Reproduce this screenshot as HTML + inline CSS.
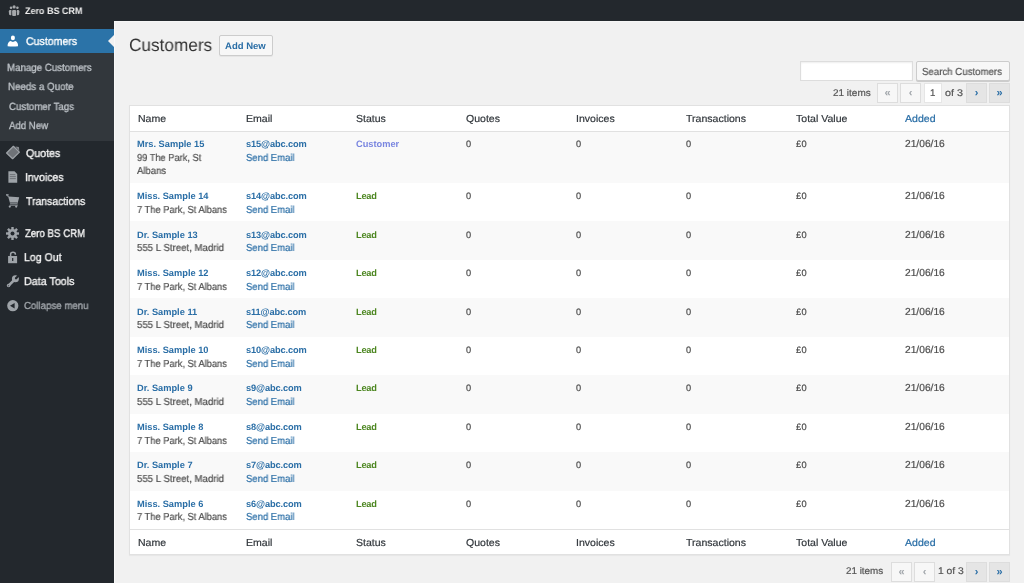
<!DOCTYPE html>
<html><head><meta charset="utf-8"><style>
html,body{margin:0;padding:0;width:1024px;height:583px;overflow:hidden;background:#f1f1f1;}
body{font-family:"Liberation Sans",sans-serif;position:relative;}
.t{position:absolute;line-height:1;white-space:nowrap;text-rendering:geometricPrecision;will-change:transform;}
.r{-webkit-text-stroke:0.2px currentColor;}
.s{-webkit-text-stroke:0.35px currentColor;}
svg{position:absolute;}
</style></head><body>
<div style="position:absolute;left:0px;top:0px;width:1024px;height:21px;background:#23282d"></div>
<div style="position:absolute;left:0px;top:21px;width:114px;height:562px;background:#23282d"></div>
<div style="position:absolute;left:0px;top:29px;width:114px;height:24px;background:#2b73a8"></div>
<svg style="left:108px;top:35px" width="6" height="12" viewBox="0 0 6 12"><path d="M6 0 L0 6 L6 12 Z" fill="#f1f1f1"/></svg>
<div style="position:absolute;left:114px;top:21px;width:1px;height:562px;background:#f8f8f8"></div>
<div style="position:absolute;left:114px;top:21px;width:910px;height:1px;background:#f6f6f6"></div>
<div style="position:absolute;left:0px;top:53px;width:114px;height:88px;background:#32373c"></div>
<svg style="left:8px;top:5px" width="12" height="12" viewBox="0 0 12 12" fill="#a5a8ab">
<circle cx="6.1" cy="1.9" r="1.6"/><circle cx="3" cy="2.7" r="1.25"/><circle cx="9.4" cy="2.7" r="1.25"/>
<path d="M4.1 6.2 Q4.1 5 5.3 5 L6.9 5 Q8.2 5 8.2 6.2 L8.1 10.4 Q6.1 11.6 4.2 10.4Z"/>
<path d="M0.8 6.4 Q0.9 5 2.2 5 L3.4 5 L3.3 10 Q1.9 10.6 1.1 9.6Z"/>
<path d="M11.4 6.4 Q11.3 5 10 5 L8.9 5 L9 10 Q10.4 10.6 11.1 9.6Z"/>
</svg>
<div class="t" style="left:25.23px;top:6.00px;font-size:9.4px;color:#eeeeee;font-weight:700;transform:scaleX(0.9592);transform-origin:0 0;">Zero BS CRM</div>
<svg style="left:7px;top:35px" width="12" height="12" viewBox="0 0 12 12" fill="#ffffff">
<ellipse cx="5.9" cy="2.9" rx="2.05" ry="2.45"/>
<path d="M0.6 11.3 Q0.4 7.3 3.4 6.1 L5.9 6.9 L8.4 6.1 Q11.3 7.3 11.0 11.3 Q5.8 11.8 0.6 11.3Z"/>
</svg>
<div class="t s" style="left:25.55px;top:37.00px;font-size:11.2px;color:#ffffff;transform:scaleX(0.9451);transform-origin:0 0;">Customers</div>
<div class="t s" style="left:7.42px;top:64.00px;font-size:10.4px;color:#bcc1c6;transform:scaleX(0.9334);transform-origin:0 0;">Manage Customers</div>
<div class="t s" style="left:7.52px;top:83.00px;font-size:10.4px;color:#bcc1c6;transform:scaleX(0.9396);transform-origin:0 0;">Needs a Quote</div>
<div class="t s" style="left:8.54px;top:103.00px;font-size:10.4px;color:#bcc1c6;transform:scaleX(0.9323);transform-origin:0 0;">Customer Tags</div>
<div class="t s" style="left:8.94px;top:122.00px;font-size:10.4px;color:#bcc1c6;transform:scaleX(0.9258);transform-origin:0 0;">Add New</div>
<div class="t s" style="left:25.56px;top:149.00px;font-size:11.2px;color:#f4f4f4;transform:scaleX(0.9495);transform-origin:0 0;">Quotes</div>
<div class="t s" style="left:24.76px;top:173.00px;font-size:11.2px;color:#f4f4f4;transform:scaleX(0.9378);transform-origin:0 0;">Invoices</div>
<div class="t s" style="left:25.66px;top:197.00px;font-size:11.2px;color:#f4f4f4;transform:scaleX(0.9320);transform-origin:0 0;">Transactions</div>
<div class="t s" style="left:25.23px;top:229.00px;font-size:11.2px;color:#f4f4f4;transform:scaleX(0.8635);transform-origin:0 0;">Zero BS CRM</div>
<div class="t s" style="left:24.36px;top:253.00px;font-size:11.2px;color:#f4f4f4;transform:scaleX(0.9435);transform-origin:0 0;">Log Out</div>
<div class="t s" style="left:24.41px;top:277.00px;font-size:11.2px;color:#f4f4f4;transform:scaleX(0.9596);transform-origin:0 0;">Data Tools</div>
<div class="t s" style="left:23.59px;top:302.00px;font-size:10.2px;color:#a0a5aa;transform:scaleX(0.9493);transform-origin:0 0;">Collapse menu</div>
<svg style="left:4px;top:143px" width="18" height="18" viewBox="0 0 18 18">
<path d="M11.4 3.6 L14.9 4 L15.3 8 Z" fill="#85898e"/>
<circle cx="11.3" cy="5.3" r="0.7" fill="#23282d"/>
<path d="M2.6 10 L9.4 3.3 L15.4 9.1 L8.6 15.7 Z" fill="#6f7378" stroke="#9ea3a8" stroke-width="1.25" stroke-linejoin="round"/>
</svg>
<svg style="left:8px;top:171px" width="10" height="12" viewBox="0 0 10 12" fill="#9ea3a8">
<path d="M0.4 0.3 L6.5 0.3 L9.2 3 L9.2 11.7 L0.4 11.7 Z"/>
<rect x="1.8" y="3.2" width="5.5" height="0.9" fill="#6a6e73"/>
<rect x="1.8" y="5.2" width="6" height="0.9" fill="#6a6e73"/>
<rect x="1.8" y="7.2" width="6" height="0.9" fill="#6a6e73"/>
</svg>
<svg style="left:4px;top:193px" width="18" height="16" viewBox="0 0 18 16" fill="#9ea3a8">
<path d="M2 2.2 L4.2 2.2 L4.6 3.6 L15.2 4.2 L13.5 10.8 L6.2 10.8 L4.3 4 Z"/>
<path d="M2 1.8 L4.6 1.8" stroke="#9ea3a8" stroke-width="1.2"/>
<rect x="6" y="9.2" width="7.6" height="1" fill="#5d6166"/>
<rect x="5.8" y="11.6" width="8" height="1"/>
<circle cx="5.8" cy="13.6" r="1.1"/><circle cx="12.2" cy="13.6" r="1.1"/>
</svg>
<svg style="left:6px;top:227px" width="13" height="13" viewBox="0 0 13 13" fill="#9ea3a8">
<rect x="5.3" y="0" width="2.4" height="13" transform="rotate(0 6.5 6.5)"/><rect x="5.3" y="0" width="2.4" height="13" transform="rotate(45 6.5 6.5)"/><rect x="5.3" y="0" width="2.4" height="13" transform="rotate(90 6.5 6.5)"/><rect x="5.3" y="0" width="2.4" height="13" transform="rotate(135 6.5 6.5)"/><circle cx="6.5" cy="6.5" r="4.6"/><circle cx="6.5" cy="6.5" r="2" fill="#23282d"/>
</svg>
<svg style="left:8px;top:251px" width="10" height="13" viewBox="0 0 10 13" fill="#9ea3a8">
<path d="M2.6 5 L2.6 3.4 Q2.6 1.3 5 1.3 Q7.4 1.3 7.4 3.4 L7.4 3.8" fill="none" stroke="#9ea3a8" stroke-width="1.5"/>
<rect x="0.1" y="5" width="9" height="7.2"/>
<rect x="4.1" y="7" width="1.2" height="3" fill="#23282d"/>
</svg>
<svg style="left:4px;top:272px" width="18" height="18" viewBox="0 0 18 18">
<path d="M4.6 13.6 L10.6 7.6" stroke="#9ea3a8" stroke-width="2.7" stroke-linecap="round"/>
<circle cx="11.4" cy="6.8" r="3.5" fill="#9ea3a8"/>
<path d="M12 6.2 L15.6 2.6" stroke="#23282d" stroke-width="2.2"/>
<circle cx="12" cy="6.3" r="1.15" fill="#23282d"/>
<circle cx="4.6" cy="13.6" r="1.75" fill="#9ea3a8"/><circle cx="4.5" cy="13.7" r="0.7" fill="#55595e"/>
</svg>
<svg style="left:7px;top:300px" width="12" height="12" viewBox="0 0 12 12">
<circle cx="5.8" cy="5.7" r="5.6" fill="#9ea3a8"/><path d="M3 5.7 L7.6 2.9 L7.6 8.5Z" fill="#23282d"/>
</svg>
<div class="t" style="left:128.96px;top:37.00px;font-size:17.8px;color:#333333;transform:scaleX(0.9677);transform-origin:0 0;">Customers</div>
<div style="position:absolute;left:219px;top:35.2px;width:53.5px;height:20.5px;box-sizing:border-box;border:1px solid #cccccc;background:#f7f7f7;border-radius:2px;box-shadow:0 1px 0 #e5e5e5"></div>
<div class="t" style="left:225.35px;top:41.00px;font-size:9.4px;color:#2a6ea6;font-weight:700;transform:scaleX(1.0156);transform-origin:0 0;">Add New</div>
<div style="position:absolute;left:800px;top:61px;width:113px;height:20px;box-sizing:border-box;border:1px solid #dddddd;background:#fff;box-shadow:inset 0 1px 2px rgba(0,0,0,.07)"></div>
<div style="position:absolute;left:916px;top:61px;width:94px;height:20px;box-sizing:border-box;border:1px solid #cccccc;background:#f7f7f7;border-radius:2px;box-shadow:0 1px 0 #cccccc"></div>
<div class="t r" style="left:922.45px;top:68.00px;font-size:10.2px;color:#555555;transform:scaleX(0.9480);transform-origin:0 0;">Search Customers</div>
<div class="t r" style="left:832.79px;top:89.00px;font-size:9.7px;color:#555555;transform:scaleX(1.0290);transform-origin:0 0;">21 items</div>
<div style="position:absolute;left:877px;top:83px;width:21px;height:20px;box-sizing:border-box;border:1px solid #dddddd;background:#f7f7f7"></div>
<div class="t" style="left:877px;top:83px;width:21px;height:20px;line-height:20.5px;text-align:center;font-size:11px;color:#a0a5aa;font-weight:700">«</div>
<div style="position:absolute;left:900px;top:83px;width:21px;height:20px;box-sizing:border-box;border:1px solid #dddddd;background:#f7f7f7"></div>
<div class="t" style="left:900px;top:83px;width:21px;height:20px;line-height:20.5px;text-align:center;font-size:11px;color:#a0a5aa;font-weight:700">‹</div>
<div style="position:absolute;left:924px;top:83px;width:18px;height:20px;box-sizing:border-box;border:1px solid #e6e6e6;background:#fff"></div>
<div class="t r" style="left:930.00px;top:89.00px;font-size:9.7px;color:#555555;">1</div>
<div class="t r" style="left:945.05px;top:89.00px;font-size:9.7px;color:#555555;transform:scaleX(1.1063);transform-origin:0 0;">of 3</div>
<div style="position:absolute;left:966px;top:83px;width:21px;height:20px;box-sizing:border-box;border:1px solid #dddddd;background:#e5e5e5"></div>
<div class="t" style="left:966px;top:83px;width:21px;height:20px;line-height:20.5px;text-align:center;font-size:11px;color:#2a6ea6;font-weight:700">›</div>
<div style="position:absolute;left:989px;top:83px;width:21px;height:20px;box-sizing:border-box;border:1px solid #dddddd;background:#e5e5e5"></div>
<div class="t" style="left:989px;top:83px;width:21px;height:20px;line-height:20.5px;text-align:center;font-size:11px;color:#2a6ea6;font-weight:700">»</div>
<div class="t r" style="left:846.15px;top:567.00px;font-size:9.7px;color:#555555;transform:scaleX(1.0144);transform-origin:0 0;">21 items</div>
<div style="position:absolute;left:891px;top:561.5px;width:21px;height:20px;box-sizing:border-box;border:1px solid #dddddd;background:#f7f7f7"></div>
<div class="t" style="left:891px;top:561.5px;width:21px;height:20px;line-height:20.5px;text-align:center;font-size:11px;color:#a0a5aa;font-weight:700">«</div>
<div style="position:absolute;left:914px;top:561.5px;width:21px;height:20px;box-sizing:border-box;border:1px solid #dddddd;background:#f7f7f7"></div>
<div class="t" style="left:914px;top:561.5px;width:21px;height:20px;line-height:20.5px;text-align:center;font-size:11px;color:#a0a5aa;font-weight:700">‹</div>
<div class="t r" style="left:937.52px;top:567.00px;font-size:9.7px;color:#555555;transform:scaleX(1.0653);transform-origin:0 0;">1 of 3</div>
<div style="position:absolute;left:966px;top:561.5px;width:21px;height:20px;box-sizing:border-box;border:1px solid #dddddd;background:#e5e5e5"></div>
<div class="t" style="left:966px;top:561.5px;width:21px;height:20px;line-height:20.5px;text-align:center;font-size:11px;color:#2a6ea6;font-weight:700">›</div>
<div style="position:absolute;left:989px;top:561.5px;width:21px;height:20px;box-sizing:border-box;border:1px solid #dddddd;background:#e5e5e5"></div>
<div class="t" style="left:989px;top:561.5px;width:21px;height:20px;line-height:20.5px;text-align:center;font-size:11px;color:#2a6ea6;font-weight:700">»</div>
<div style="position:absolute;left:129.4px;top:105.4px;width:880.8px;height:449.4px;box-sizing:border-box;border:1px solid #e1e1e1;background:#fff;box-shadow:0 1px 1px rgba(0,0,0,.04)"></div>
<div style="position:absolute;left:130.4px;top:131px;width:878.8px;height:1px;background:#e1e1e1"></div>
<div style="position:absolute;left:130.4px;top:529px;width:878.8px;height:1px;background:#e1e1e1"></div>
<div class="t r" style="left:137.70px;top:115.00px;font-size:10.2px;color:#32373c;transform:scaleX(1.035);transform-origin:0 0;">Name</div>
<div class="t r" style="left:246.30px;top:115.00px;font-size:10.2px;color:#32373c;transform:scaleX(1.035);transform-origin:0 0;">Email</div>
<div class="t r" style="left:355.80px;top:115.00px;font-size:10.2px;color:#32373c;transform:scaleX(1.035);transform-origin:0 0;">Status</div>
<div class="t r" style="left:465.50px;top:115.00px;font-size:10.2px;color:#32373c;transform:scaleX(1.035);transform-origin:0 0;">Quotes</div>
<div class="t r" style="left:575.60px;top:115.00px;font-size:10.2px;color:#32373c;transform:scaleX(1.035);transform-origin:0 0;">Invoices</div>
<div class="t r" style="left:685.60px;top:115.00px;font-size:10.2px;color:#32373c;transform:scaleX(1.035);transform-origin:0 0;">Transactions</div>
<div class="t r" style="left:796.00px;top:115.00px;font-size:10.2px;color:#32373c;transform:scaleX(1.035);transform-origin:0 0;">Total Value</div>
<div class="t r" style="left:905.00px;top:115.00px;font-size:10.2px;color:#2a6ea6;transform:scaleX(1.035);transform-origin:0 0;">Added</div>
<div class="t r" style="left:137.70px;top:539.00px;font-size:10.2px;color:#32373c;transform:scaleX(1.035);transform-origin:0 0;">Name</div>
<div class="t r" style="left:246.30px;top:539.00px;font-size:10.2px;color:#32373c;transform:scaleX(1.035);transform-origin:0 0;">Email</div>
<div class="t r" style="left:355.80px;top:539.00px;font-size:10.2px;color:#32373c;transform:scaleX(1.035);transform-origin:0 0;">Status</div>
<div class="t r" style="left:465.50px;top:539.00px;font-size:10.2px;color:#32373c;transform:scaleX(1.035);transform-origin:0 0;">Quotes</div>
<div class="t r" style="left:575.60px;top:539.00px;font-size:10.2px;color:#32373c;transform:scaleX(1.035);transform-origin:0 0;">Invoices</div>
<div class="t r" style="left:685.60px;top:539.00px;font-size:10.2px;color:#32373c;transform:scaleX(1.035);transform-origin:0 0;">Transactions</div>
<div class="t r" style="left:796.00px;top:539.00px;font-size:10.2px;color:#32373c;transform:scaleX(1.035);transform-origin:0 0;">Total Value</div>
<div class="t r" style="left:905.00px;top:539.00px;font-size:10.2px;color:#2a6ea6;transform:scaleX(1.035);transform-origin:0 0;">Added</div>
<div style="position:absolute;left:130.4px;top:132px;width:878.8px;height:51px;background:#f9f9f9"></div>
<div class="t" style="left:136.90px;top:140.00px;font-size:9.25px;color:#2a6ea6;font-weight:700;">Mrs. Sample 15</div>
<div class="t r" style="left:137.18px;top:154.00px;font-size:10.2px;color:#4d4d4d;transform:scaleX(0.9098);transform-origin:0 0;">99 The Park, St</div>
<div class="t r" style="left:136.95px;top:167.00px;font-size:10.2px;color:#4d4d4d;transform:scaleX(0.9349);transform-origin:0 0;">Albans</div>
<div class="t" style="left:245.70px;top:140.00px;font-size:9.25px;color:#2a6ea6;font-weight:700;letter-spacing:-0.13px;">s15@abc.com</div>
<div class="t r" style="left:245.97px;top:154.00px;font-size:10.2px;color:#2a6ea6;transform:scaleX(0.9314);transform-origin:0 0;">Send Email</div>
<div class="t" style="left:355.80px;top:140.00px;font-size:9.25px;color:#7a86e0;font-weight:700;">Customer</div>
<div class="t r" style="left:465.50px;top:140.00px;font-size:9.25px;color:#4d4d4d;letter-spacing:0.3px;">0</div>
<div class="t r" style="left:575.60px;top:140.00px;font-size:9.25px;color:#4d4d4d;letter-spacing:0.3px;">0</div>
<div class="t r" style="left:685.60px;top:140.00px;font-size:9.25px;color:#4d4d4d;letter-spacing:0.3px;">0</div>
<div class="t r" style="left:796.00px;top:140.00px;font-size:9.25px;color:#4d4d4d;letter-spacing:0.3px;">£0</div>
<div class="t r" style="left:905.09px;top:140.00px;font-size:10.2px;color:#4d4d4d;transform:scaleX(1.0024);transform-origin:0 0;">21/06/16</div>
<div class="t" style="left:136.90px;top:192.00px;font-size:9.25px;color:#2a6ea6;font-weight:700;">Miss. Sample 14</div>
<div class="t r" style="left:137.13px;top:206.00px;font-size:10.2px;color:#4d4d4d;transform:scaleX(0.9138);transform-origin:0 0;">7 The Park, St Albans</div>
<div class="t" style="left:245.70px;top:192.00px;font-size:9.25px;color:#2a6ea6;font-weight:700;letter-spacing:-0.13px;">s14@abc.com</div>
<div class="t r" style="left:245.97px;top:206.00px;font-size:10.2px;color:#2a6ea6;transform:scaleX(0.9314);transform-origin:0 0;">Send Email</div>
<div class="t" style="left:355.80px;top:192.00px;font-size:9.25px;color:#4c8620;font-weight:700;letter-spacing:-0.25px;">Lead</div>
<div class="t r" style="left:465.50px;top:192.00px;font-size:9.25px;color:#4d4d4d;letter-spacing:0.3px;">0</div>
<div class="t r" style="left:575.60px;top:192.00px;font-size:9.25px;color:#4d4d4d;letter-spacing:0.3px;">0</div>
<div class="t r" style="left:685.60px;top:192.00px;font-size:9.25px;color:#4d4d4d;letter-spacing:0.3px;">0</div>
<div class="t r" style="left:796.00px;top:192.00px;font-size:9.25px;color:#4d4d4d;letter-spacing:0.3px;">£0</div>
<div class="t r" style="left:905.09px;top:192.00px;font-size:10.2px;color:#4d4d4d;transform:scaleX(1.0024);transform-origin:0 0;">21/06/16</div>
<div style="position:absolute;left:130.4px;top:221.44px;width:878.8px;height:38.44px;background:#f9f9f9"></div>
<div class="t" style="left:136.90px;top:231.00px;font-size:9.25px;color:#2a6ea6;font-weight:700;">Dr. Sample 13</div>
<div class="t r" style="left:137.21px;top:244.00px;font-size:10.2px;color:#4d4d4d;transform:scaleX(0.9463);transform-origin:0 0;">555 L Street, Madrid</div>
<div class="t" style="left:245.70px;top:231.00px;font-size:9.25px;color:#2a6ea6;font-weight:700;letter-spacing:-0.13px;">s13@abc.com</div>
<div class="t r" style="left:245.97px;top:244.00px;font-size:10.2px;color:#2a6ea6;transform:scaleX(0.9314);transform-origin:0 0;">Send Email</div>
<div class="t" style="left:355.80px;top:231.00px;font-size:9.25px;color:#4c8620;font-weight:700;letter-spacing:-0.25px;">Lead</div>
<div class="t r" style="left:465.50px;top:231.00px;font-size:9.25px;color:#4d4d4d;letter-spacing:0.3px;">0</div>
<div class="t r" style="left:575.60px;top:231.00px;font-size:9.25px;color:#4d4d4d;letter-spacing:0.3px;">0</div>
<div class="t r" style="left:685.60px;top:231.00px;font-size:9.25px;color:#4d4d4d;letter-spacing:0.3px;">0</div>
<div class="t r" style="left:796.00px;top:231.00px;font-size:9.25px;color:#4d4d4d;letter-spacing:0.3px;">£0</div>
<div class="t r" style="left:905.09px;top:231.00px;font-size:10.2px;color:#4d4d4d;transform:scaleX(1.0024);transform-origin:0 0;">21/06/16</div>
<div class="t" style="left:136.90px;top:269.00px;font-size:9.25px;color:#2a6ea6;font-weight:700;">Miss. Sample 12</div>
<div class="t r" style="left:137.13px;top:283.00px;font-size:10.2px;color:#4d4d4d;transform:scaleX(0.9138);transform-origin:0 0;">7 The Park, St Albans</div>
<div class="t" style="left:245.70px;top:269.00px;font-size:9.25px;color:#2a6ea6;font-weight:700;letter-spacing:-0.13px;">s12@abc.com</div>
<div class="t r" style="left:245.97px;top:283.00px;font-size:10.2px;color:#2a6ea6;transform:scaleX(0.9314);transform-origin:0 0;">Send Email</div>
<div class="t" style="left:355.80px;top:269.00px;font-size:9.25px;color:#4c8620;font-weight:700;letter-spacing:-0.25px;">Lead</div>
<div class="t r" style="left:465.50px;top:269.00px;font-size:9.25px;color:#4d4d4d;letter-spacing:0.3px;">0</div>
<div class="t r" style="left:575.60px;top:269.00px;font-size:9.25px;color:#4d4d4d;letter-spacing:0.3px;">0</div>
<div class="t r" style="left:685.60px;top:269.00px;font-size:9.25px;color:#4d4d4d;letter-spacing:0.3px;">0</div>
<div class="t r" style="left:796.00px;top:269.00px;font-size:9.25px;color:#4d4d4d;letter-spacing:0.3px;">£0</div>
<div class="t r" style="left:905.09px;top:269.00px;font-size:10.2px;color:#4d4d4d;transform:scaleX(1.0024);transform-origin:0 0;">21/06/16</div>
<div style="position:absolute;left:130.4px;top:298.32px;width:878.8px;height:38.44px;background:#f9f9f9"></div>
<div class="t" style="left:136.90px;top:308.00px;font-size:9.25px;color:#2a6ea6;font-weight:700;">Dr. Sample 11</div>
<div class="t r" style="left:137.21px;top:321.00px;font-size:10.2px;color:#4d4d4d;transform:scaleX(0.9463);transform-origin:0 0;">555 L Street, Madrid</div>
<div class="t" style="left:245.70px;top:308.00px;font-size:9.25px;color:#2a6ea6;font-weight:700;letter-spacing:-0.13px;">s11@abc.com</div>
<div class="t r" style="left:245.97px;top:321.00px;font-size:10.2px;color:#2a6ea6;transform:scaleX(0.9314);transform-origin:0 0;">Send Email</div>
<div class="t" style="left:355.80px;top:308.00px;font-size:9.25px;color:#4c8620;font-weight:700;letter-spacing:-0.25px;">Lead</div>
<div class="t r" style="left:465.50px;top:308.00px;font-size:9.25px;color:#4d4d4d;letter-spacing:0.3px;">0</div>
<div class="t r" style="left:575.60px;top:308.00px;font-size:9.25px;color:#4d4d4d;letter-spacing:0.3px;">0</div>
<div class="t r" style="left:685.60px;top:308.00px;font-size:9.25px;color:#4d4d4d;letter-spacing:0.3px;">0</div>
<div class="t r" style="left:796.00px;top:308.00px;font-size:9.25px;color:#4d4d4d;letter-spacing:0.3px;">£0</div>
<div class="t r" style="left:905.09px;top:308.00px;font-size:10.2px;color:#4d4d4d;transform:scaleX(1.0024);transform-origin:0 0;">21/06/16</div>
<div class="t" style="left:136.90px;top:346.00px;font-size:9.25px;color:#2a6ea6;font-weight:700;">Miss. Sample 10</div>
<div class="t r" style="left:137.13px;top:360.00px;font-size:10.2px;color:#4d4d4d;transform:scaleX(0.9138);transform-origin:0 0;">7 The Park, St Albans</div>
<div class="t" style="left:245.70px;top:346.00px;font-size:9.25px;color:#2a6ea6;font-weight:700;letter-spacing:-0.13px;">s10@abc.com</div>
<div class="t r" style="left:245.97px;top:360.00px;font-size:10.2px;color:#2a6ea6;transform:scaleX(0.9314);transform-origin:0 0;">Send Email</div>
<div class="t" style="left:355.80px;top:346.00px;font-size:9.25px;color:#4c8620;font-weight:700;letter-spacing:-0.25px;">Lead</div>
<div class="t r" style="left:465.50px;top:346.00px;font-size:9.25px;color:#4d4d4d;letter-spacing:0.3px;">0</div>
<div class="t r" style="left:575.60px;top:346.00px;font-size:9.25px;color:#4d4d4d;letter-spacing:0.3px;">0</div>
<div class="t r" style="left:685.60px;top:346.00px;font-size:9.25px;color:#4d4d4d;letter-spacing:0.3px;">0</div>
<div class="t r" style="left:796.00px;top:346.00px;font-size:9.25px;color:#4d4d4d;letter-spacing:0.3px;">£0</div>
<div class="t r" style="left:905.09px;top:346.00px;font-size:10.2px;color:#4d4d4d;transform:scaleX(1.0024);transform-origin:0 0;">21/06/16</div>
<div style="position:absolute;left:130.4px;top:375.2px;width:878.8px;height:38.44px;background:#f9f9f9"></div>
<div class="t" style="left:136.90px;top:384.00px;font-size:9.25px;color:#2a6ea6;font-weight:700;">Dr. Sample 9</div>
<div class="t r" style="left:137.21px;top:398.00px;font-size:10.2px;color:#4d4d4d;transform:scaleX(0.9463);transform-origin:0 0;">555 L Street, Madrid</div>
<div class="t" style="left:245.70px;top:384.00px;font-size:9.25px;color:#2a6ea6;font-weight:700;letter-spacing:-0.13px;">s9@abc.com</div>
<div class="t r" style="left:245.97px;top:398.00px;font-size:10.2px;color:#2a6ea6;transform:scaleX(0.9314);transform-origin:0 0;">Send Email</div>
<div class="t" style="left:355.80px;top:384.00px;font-size:9.25px;color:#4c8620;font-weight:700;letter-spacing:-0.25px;">Lead</div>
<div class="t r" style="left:465.50px;top:384.00px;font-size:9.25px;color:#4d4d4d;letter-spacing:0.3px;">0</div>
<div class="t r" style="left:575.60px;top:384.00px;font-size:9.25px;color:#4d4d4d;letter-spacing:0.3px;">0</div>
<div class="t r" style="left:685.60px;top:384.00px;font-size:9.25px;color:#4d4d4d;letter-spacing:0.3px;">0</div>
<div class="t r" style="left:796.00px;top:384.00px;font-size:9.25px;color:#4d4d4d;letter-spacing:0.3px;">£0</div>
<div class="t r" style="left:905.09px;top:384.00px;font-size:10.2px;color:#4d4d4d;transform:scaleX(1.0024);transform-origin:0 0;">21/06/16</div>
<div class="t" style="left:136.90px;top:423.00px;font-size:9.25px;color:#2a6ea6;font-weight:700;">Miss. Sample 8</div>
<div class="t r" style="left:137.13px;top:437.00px;font-size:10.2px;color:#4d4d4d;transform:scaleX(0.9138);transform-origin:0 0;">7 The Park, St Albans</div>
<div class="t" style="left:245.70px;top:423.00px;font-size:9.25px;color:#2a6ea6;font-weight:700;letter-spacing:-0.13px;">s8@abc.com</div>
<div class="t r" style="left:245.97px;top:437.00px;font-size:10.2px;color:#2a6ea6;transform:scaleX(0.9314);transform-origin:0 0;">Send Email</div>
<div class="t" style="left:355.80px;top:423.00px;font-size:9.25px;color:#4c8620;font-weight:700;letter-spacing:-0.25px;">Lead</div>
<div class="t r" style="left:465.50px;top:423.00px;font-size:9.25px;color:#4d4d4d;letter-spacing:0.3px;">0</div>
<div class="t r" style="left:575.60px;top:423.00px;font-size:9.25px;color:#4d4d4d;letter-spacing:0.3px;">0</div>
<div class="t r" style="left:685.60px;top:423.00px;font-size:9.25px;color:#4d4d4d;letter-spacing:0.3px;">0</div>
<div class="t r" style="left:796.00px;top:423.00px;font-size:9.25px;color:#4d4d4d;letter-spacing:0.3px;">£0</div>
<div class="t r" style="left:905.09px;top:423.00px;font-size:10.2px;color:#4d4d4d;transform:scaleX(1.0024);transform-origin:0 0;">21/06/16</div>
<div style="position:absolute;left:130.4px;top:452.08px;width:878.8px;height:38.44px;background:#f9f9f9"></div>
<div class="t" style="left:136.90px;top:461.00px;font-size:9.25px;color:#2a6ea6;font-weight:700;">Dr. Sample 7</div>
<div class="t r" style="left:137.21px;top:475.00px;font-size:10.2px;color:#4d4d4d;transform:scaleX(0.9463);transform-origin:0 0;">555 L Street, Madrid</div>
<div class="t" style="left:245.70px;top:461.00px;font-size:9.25px;color:#2a6ea6;font-weight:700;letter-spacing:-0.13px;">s7@abc.com</div>
<div class="t r" style="left:245.97px;top:475.00px;font-size:10.2px;color:#2a6ea6;transform:scaleX(0.9314);transform-origin:0 0;">Send Email</div>
<div class="t" style="left:355.80px;top:461.00px;font-size:9.25px;color:#4c8620;font-weight:700;letter-spacing:-0.25px;">Lead</div>
<div class="t r" style="left:465.50px;top:461.00px;font-size:9.25px;color:#4d4d4d;letter-spacing:0.3px;">0</div>
<div class="t r" style="left:575.60px;top:461.00px;font-size:9.25px;color:#4d4d4d;letter-spacing:0.3px;">0</div>
<div class="t r" style="left:685.60px;top:461.00px;font-size:9.25px;color:#4d4d4d;letter-spacing:0.3px;">0</div>
<div class="t r" style="left:796.00px;top:461.00px;font-size:9.25px;color:#4d4d4d;letter-spacing:0.3px;">£0</div>
<div class="t r" style="left:905.09px;top:461.00px;font-size:10.2px;color:#4d4d4d;transform:scaleX(1.0024);transform-origin:0 0;">21/06/16</div>
<div class="t" style="left:136.90px;top:500.00px;font-size:9.25px;color:#2a6ea6;font-weight:700;">Miss. Sample 6</div>
<div class="t r" style="left:137.13px;top:513.00px;font-size:10.2px;color:#4d4d4d;transform:scaleX(0.9138);transform-origin:0 0;">7 The Park, St Albans</div>
<div class="t" style="left:245.70px;top:500.00px;font-size:9.25px;color:#2a6ea6;font-weight:700;letter-spacing:-0.13px;">s6@abc.com</div>
<div class="t r" style="left:245.97px;top:513.00px;font-size:10.2px;color:#2a6ea6;transform:scaleX(0.9314);transform-origin:0 0;">Send Email</div>
<div class="t" style="left:355.80px;top:500.00px;font-size:9.25px;color:#4c8620;font-weight:700;letter-spacing:-0.25px;">Lead</div>
<div class="t r" style="left:465.50px;top:500.00px;font-size:9.25px;color:#4d4d4d;letter-spacing:0.3px;">0</div>
<div class="t r" style="left:575.60px;top:500.00px;font-size:9.25px;color:#4d4d4d;letter-spacing:0.3px;">0</div>
<div class="t r" style="left:685.60px;top:500.00px;font-size:9.25px;color:#4d4d4d;letter-spacing:0.3px;">0</div>
<div class="t r" style="left:796.00px;top:500.00px;font-size:9.25px;color:#4d4d4d;letter-spacing:0.3px;">£0</div>
<div class="t r" style="left:905.09px;top:500.00px;font-size:10.2px;color:#4d4d4d;transform:scaleX(1.0024);transform-origin:0 0;">21/06/16</div>
</body></html>
